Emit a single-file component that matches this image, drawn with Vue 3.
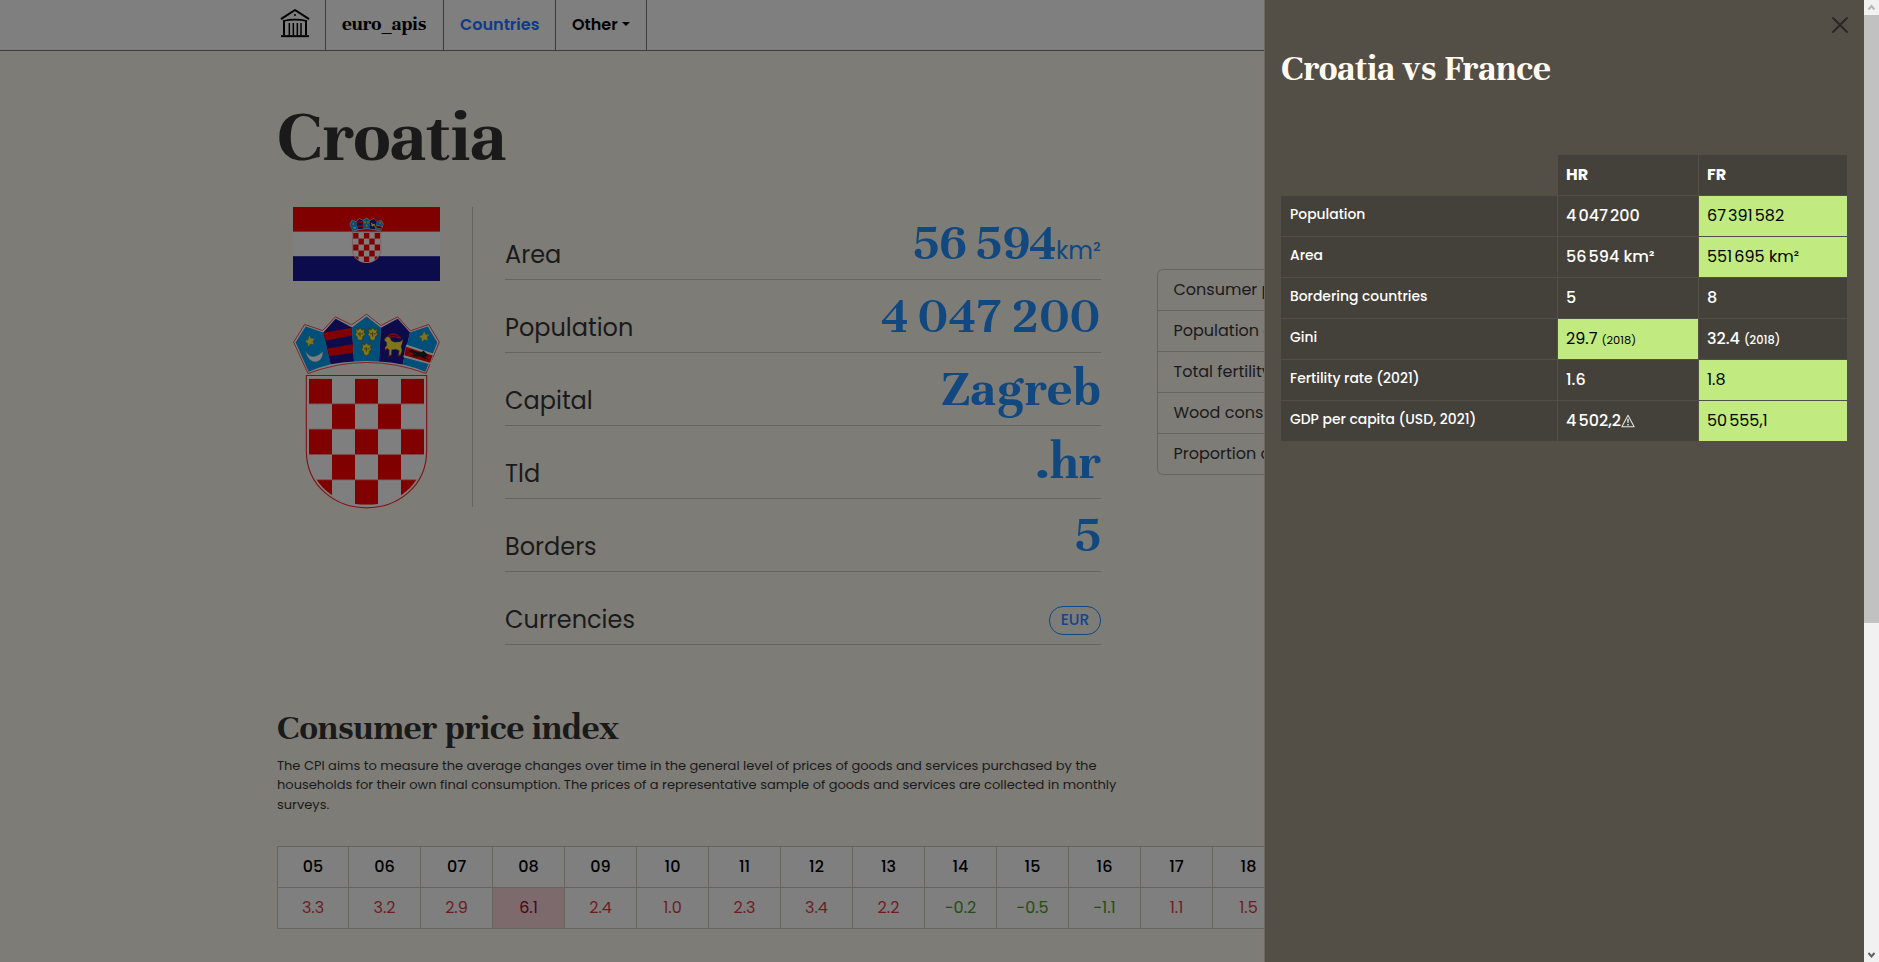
<script setup>
const facts = [
  { label: 'Area', value: '56 594', unit: 'km²', kind: 'area' },
  { label: 'Population', value: '4 047 200', kind: 'population' },
  { label: 'Capital', value: 'Zagreb', kind: 'word' },
  { label: 'Tld', value: '.hr' },
  { label: 'Borders', value: '5' },
  { label: 'Currencies', badge: 'EUR' },
]

const sections = [
  'Consumer price index',
  'Population change',
  'Total fertility rate',
  'Wood consumption',
  'Proportion of seats',
]

const cpi = [
  ['05', '3.3'], ['06', '3.2'], ['07', '2.9'], ['08', '6.1'], ['09', '2.4'],
  ['10', '1.0'], ['11', '2.3'], ['12', '3.4'], ['13', '2.2'], ['14', '−0.2'],
  ['15', '−0.5'], ['16', '−1.1'], ['17', '1.1'], ['18', '1.5'],
].map(([year, value]) => ({ year, value, down: value.startsWith('−'), peak: value === '6.1' }))

const compare = [
  { label: 'Population', hr: '4\u202f047\u202f200', fr: '67\u202f391\u202f582', best: 'fr' },
  { label: 'Area', hr: '56\u202f594 km²', fr: '551\u202f695 km²', best: 'fr' },
  { label: 'Bordering countries', hr: '5', fr: '8' },
  { label: 'Gini', hr: '29.7', fr: '32.4', year: '(2018)', best: 'hr' },
  { label: 'Fertility rate (2021)', hr: '1.6', fr: '1.8', best: 'fr' },
  { label: 'GDP per capita (USD, 2021)', hr: '4\u202f502,2', fr: '50\u202f555,1', best: 'fr', warn: true },
]

const squares = []
for (let r = 0; r < 5; r++) {
  for (let c = 0; c < 5; c++) {
    if ((r + c) % 2 === 0) squares.push({ x: 87 + c * 69, y: 234 + r * 76 })
  }
}
</script>

<template>
  <div class="screen">
    <div class="page">
      <nav class="nav">
        <a class="logo">
          <svg viewBox="60 24 90 90" width="30" height="30" fill="none" stroke="#000">
            <path d="M65 56 L105 30 L145 56" stroke-width="6" stroke-linejoin="round" stroke-linecap="round" />
            <circle cx="105" cy="45" r="3" fill="#000" stroke="none" />
            <path d="M69 63 Q105 55 141 63" stroke-width="5" />
            <path d="M72 62V106M138 62V106" stroke-width="6" />
            <path d="M88 69V106M100 69V106M112 69V106M123 69V106" stroke-width="4.5" />
            <path d="M63 108.500H147" stroke-width="6" />
          </svg>
        </a>
        <a class="brand">euro_apis</a>
        <a class="link active">Countries</a>
        <a class="link other">Other<i class="caret"></i></a>
      </nav>

      <main class="content">
        <h1>Croatia</h1>
        <div class="overview">
          <div class="emblems">
            <svg class="flag" viewBox="0 0 147 74" width="147" height="74">
              <rect width="147" height="74" fill="#7f7f7f" />
              <rect width="147" height="24.600" fill="#800000" />
              <rect y="49.200" width="147" height="24.800" fill="#0c0b4b" />
              <use href="#arms" x="56.300" y="10.300" width="34.600" height="46" />
            </svg>
            <svg class="coat" viewBox="39 38 441 587" width="147" height="196">
              <defs>
                <clipPath id="inner">
                  <path d="M87 234H432V455C432 555 350 613 260 613C170 613 87 555 87 455Z" />
                </clipPath>
                <symbol id="arms" viewBox="39 38 441 587">
                  <path d="M41 125L74 72L128 90L166 49L215 73L260 41L303 75L353 49L391 91L446 72L478 125L438 219Q260 153 84 219Z" fill="#7f7f7f" stroke="#7f2529" stroke-width="3" />
                  <path d="M47 126L77 78L130 96L152 191Q116 200 86 214Z" fill="#004f78" />
                  <path d="M130 96L167 55L216 81L222 183Q186 185 152 191Z" fill="#0c0b4b" />
                  <path d="M131 97L216 82V105L136 121ZM142 144L219 131L220 157L148 167Z" fill="#800000" />
                  <path d="M216 81L260 48L303 82L297 183Q260 180 222 183Z" fill="#004f78" />
                  <path d="M303 82L353 55L390 96L368 192Q332 185 297 183Z" fill="#0c0b4b" />
                  <path d="M390 96L443 78L472 126L436 214Q404 200 368 192Z" fill="#004f78" />
                  <path d="M379 132L461 160L452 192L370 170Z" fill="#7f7f7f" />
                  <path d="M378 139L458 165L450 187L373 164Z" fill="#800000" />
                  <path d="M385 150L397 148L407 154L423 155L431 151L445 165L436 169L444 178L429 173L420 168L404 169L392 164L403 162Z" fill="#111" />
                  <path d="M88 104L93 114L104 114L98 122L102 132L92 130L85 138L83 128L75 122L84 118ZM433 92L437 102L448 103L441 110L444 120L434 117L426 124L425 113L417 108L427 104Z" fill="#80751b" stroke="#4c4720" />
                  <path d="M77 153Q97 184 128 154Q129 180 107 184Q85 184 77 153Z" fill="#7f7f7f" stroke="#44606b" />
                  <g fill="#80751b" stroke="#34340f" stroke-width="2">
                    <path id="lion" d="M227 83L234 89L240 82L247 89L254 84L252 96L256 103L249 107L248 116L240 121L232 116L231 108L225 103L229 96Z" />
                    <use href="#lion" x="38" />
                    <use href="#lion" x="19" y="45" />
                  </g>
                  <path d="M240 95V108M233 100H238M244 100H249M278 95V108M271 100H276M282 100H287M259 140V153M252 145H257M263 145H268" stroke="#252716" stroke-width="2.500" />
                  <path d="M314 115L322 108L330 111L334 121L344 125L361 124L369 117L366 130L363 139L366 150L361 164H355L358 151L348 146L335 148L334 164H327L328 149L322 143L315 148V141L320 136V125L314 121Z" fill="#80751b" stroke="#39351a" />
                  <path d="M324 108Q333 96 350 103L362 113M328 110Q342 106 357 113M315 150L321 145M325 166H333M353 165H361" fill="none" stroke="#800b0b" stroke-width="4" />
                  <path d="M79 225H440V450C440 560 350 622 260 622C170 622 79 560 79 450Z" fill="#7f7f7f" stroke="#7f1418" stroke-width="3.500" />
                  <g clip-path="url(#inner)">
                    <rect v-for="(s, i) in squares" :key="i" :x="s.x" :y="s.y" width="69" height="76" fill="#800000" />
                    <path d="M87 310H432M87 386H432M87 462H432M87 538H432" stroke="#7f4a4c" stroke-width="2" />
                  </g>
                </symbol>
              </defs>
              <use href="#arms" x="39" y="38" width="441" height="587" />
            </svg>
          </div>

          <dl class="facts">
            <div v-for="f in facts" :key="f.label" class="fact">
              <dt>{{ f.label }}</dt>
              <dd v-if="f.badge" class="badge">{{ f.badge }}</dd>
              <dd v-else class="value" :class="f.kind">{{ f.value }}<span v-if="f.unit" class="unit">{{ f.unit }}</span></dd>
            </div>
          </dl>

          <ul class="sections">
            <li v-for="s in sections" :key="s">{{ s }}</li>
          </ul>
        </div>

        <h2>Consumer price index</h2>
        <p class="lead">
          The CPI aims to measure the average changes over time in the general level of prices of goods and services purchased by the<br />
          households for their own final consumption. The prices of a representative sample of goods and services are collected in monthly<br />
          surveys.
        </p>
        <div class="cpi">
          <div v-for="c in cpi" :key="c.year" class="col">
            <div class="year">{{ c.year }}</div>
            <div class="rate" :class="{ down: c.down, peak: c.peak }">{{ c.value }}</div>
          </div>
        </div>
      </main>
    </div>

    <aside class="panel">
      <div class="close">
        <svg viewBox="0 0 16 16" width="16" height="16" stroke="#292723" stroke-width="1.800" stroke-linecap="round">
          <path d="M1 1L15 15M15 1L1 15" />
        </svg>
      </div>
      <h3>Croatia vs France</h3>
      <div class="compare">
        <div></div>
        <div class="cell head">HR</div>
        <div class="cell head">FR</div>
        <template v-for="r in compare" :key="r.label">
          <div class="cell name">{{ r.label }}</div>
          <div class="cell" :class="{ best: r.best === 'hr' }">
            <span>{{ r.hr }}</span><small v-if="r.year">{{ r.year }}</small>
            <svg v-if="r.warn" viewBox="0 0 16 16" width="14" height="14" fill="none" stroke="#e6e4df" stroke-linejoin="round">
              <path d="M8 1.500L15 14.500H1Z" stroke-width="1.200" />
              <path d="M8 5.500V10M8 11.500V13" stroke-width="1.600" />
            </svg>
          </div>
          <div class="cell" :class="{ best: r.best === 'fr' }">
            <span>{{ r.fr }}</span><small v-if="r.year">{{ r.year }}</small>
          </div>
        </template>
      </div>
    </aside>

    <div class="scrollbar">
      <div class="btn">
        <svg viewBox="0 0 15 15" width="15" height="15" fill="none" stroke="#b5b5b5" stroke-width="2"><path d="M4.500 9.500L7.500 6L10.500 9.500" /></svg>
      </div>
      <div class="thumb"></div>
      <div class="btn">
        <svg viewBox="0 0 15 15" width="15" height="15" fill="none" stroke="#606060" stroke-width="2"><path d="M4.500 6L7.500 9.500L10.500 6" /></svg>
      </div>
    </div>
  </div>
</template>

<style>
body {
  background: #7e7c77;
}
</style>

<style scoped>
* {
  box-sizing: border-box;
}
.screen {
  position: relative;
  display: flex;
  width: 1879px;
  height: 962px;
  overflow: hidden;
  background: #7e7c77;
  color: #1a1a1a;
  font-family: Poppins, Inter, sans-serif;
}
.page {
  flex: 1;
  min-width: 0;
  overflow: hidden;
}
.nav {
  display: flex;
  height: 51px;
  padding-left: 265px;
  background: #7f7f7f;
  border-bottom: 1px solid #3d3d3d;
}
.nav a {
  display: flex;
  align-items: center;
  height: 50px;
  padding: 0 0 2px 16px;
  border-right: 1px solid #3d3d3d;
  color: #000;
  white-space: nowrap;
}
.nav .logo {
  width: 61px;
  padding: 0 0 4px 15px;
}
.nav .brand {
  width: 118px;
  font: 700 20.8px/24px Unna, 'Liberation Serif', serif;
}
.nav .link {
  width: 112px;
  font-size: 16px;
  font-weight: 600;
}
.nav .active {
  color: #0f3a87;
}
.nav .other {
  width: 91px;
}
.caret {
  width: 0;
  margin: 0 0 1px 4px;
  border: 4px solid transparent;
  border-top-color: #000;
  border-bottom: 0;
}
.content {
  padding: 51px 0 0 277px;
}
h1,
h2,
h3 {
  margin: 0;
  font-family: Unna, 'Liberation Serif', serif;
  font-weight: 700;
  white-space: nowrap;
}
h1 {
  font-size: 76px;
  line-height: 70px;
}
.overview {
  display: flex;
  align-items: flex-start;
  margin-top: 35px;
}
.emblems {
  display: flex;
  flex-direction: column;
  width: 196px;
  height: 300px;
  padding-left: 16px;
  border-right: 1px solid #65635a;
}
.flag,
.coat {
  flex: none;
}
.coat {
  margin-top: 32px;
}
.facts {
  flex: none;
  width: 596px;
  margin: 0 56px 0 32px;
}
.fact {
  display: flex;
  align-items: flex-end;
  justify-content: space-between;
  height: 73px;
  padding-bottom: 9px;
  border-bottom: 1px solid #67655b;
}
.fact dt {
  font-size: 24px;
  line-height: 30px;
}
.fact dd {
  margin: 0;
}
.fact .value {
  margin-bottom: 1px;
  color: #114880;
  font: 700 53.5px/52px Unna, 'Liberation Serif', serif;
  white-space: nowrap;
}
.area {
  word-spacing: -2px;
  letter-spacing: 0.4px;
}
.population {
  word-spacing: -3px;
  letter-spacing: 1.6px;
}
.word {
  letter-spacing: 0.7px;
}
.unit {
  font: 400 24px/30px Poppins, Inter, sans-serif;
  letter-spacing: 0;
}
.fact .badge {
  width: 52px;
  height: 29px;
  border: 1px solid #114880;
  border-radius: 14px;
  color: #12478a;
  font-size: 15.5px;
  font-weight: 500;
  line-height: 26px;
  text-align: center;
}
.sections {
  flex: none;
  width: 300px;
  margin: 62px 0 0;
  padding: 0;
  border: 1px solid #67655b;
  border-radius: 6px;
  list-style: none;
}
.sections li {
  height: 41px;
  padding-left: 15.5px;
  border-bottom: 1px solid #67655b;
  font-size: 16px;
  line-height: 40px;
}
.sections li:last-child {
  height: 40px;
  border-bottom: 0;
}
h2 {
  margin-top: 63px;
  font-size: 37.6px;
  line-height: 40px;
}
.lead {
  margin: 7.8px 0 0;
  font-size: 13px;
  line-height: 19.5px;
  white-space: nowrap;
}
.cpi {
  display: flex;
  width: max-content;
  margin-top: 31.7px;
  border: 1px solid #67655b;
  background: #7f7f7f;
  font-size: 16px;
  line-height: 40px;
  text-align: center;
}
.col {
  width: 72px;
  border-right: 1px solid #67655b;
}
.col:first-child {
  width: 71px;
}
.year {
  height: 41px;
  border-bottom: 1px solid #67655b;
  color: #000;
  font-weight: 500;
}
.rate {
  height: 40px;
  color: #6c1d1f;
}
.down {
  color: #214e14;
}
.peak {
  background: #7d6a6d;
  color: #4e0412;
}
.panel {
  position: absolute;
  top: 0;
  right: 15px;
  width: 600px;
  height: 962px;
  padding: 0 17px 0 16px;
  border-left: 1px solid #6a6863;
  background: #534e46;
  color: #fff;
}
.close {
  display: flex;
  justify-content: flex-end;
  padding: 17px 0 0;
  margin-right: -1px;
}
h3 {
  margin-top: 16px;
  color: #fffaf2;
  font-size: 37.8px;
  line-height: 40px;
}
.compare {
  display: grid;
  grid-template-columns: 276px 140px 148px;
  grid-auto-rows: 40px;
  gap: 1px;
  margin-top: 66px;
}
.cell {
  display: flex;
  align-items: center;
  padding: 0 0 1px 8px;
  background: #44413a;
  font-size: 16px;
  font-weight: 500;
  white-space: nowrap;
}
.head {
  padding-bottom: 2px;
  font-weight: 700;
}
.name {
  padding-bottom: 4px;
  padding-left: 9px;
  font-size: 13.9px;
}
.best {
  background: #c1eb80;
  color: #000;
  font-weight: 400;
}
.cell small {
  margin: 3px 0 0 4px;
  font-size: 11.4px;
}
.scrollbar {
  display: flex;
  flex-direction: column;
  width: 15px;
  height: 962px;
  background: #f1f1f1;
}
.btn {
  height: 15px;
}
.btn svg {
  display: block;
}
.thumb {
  height: 608px;
  margin-bottom: auto;
  background: #c1c1c1;
}
</style>
